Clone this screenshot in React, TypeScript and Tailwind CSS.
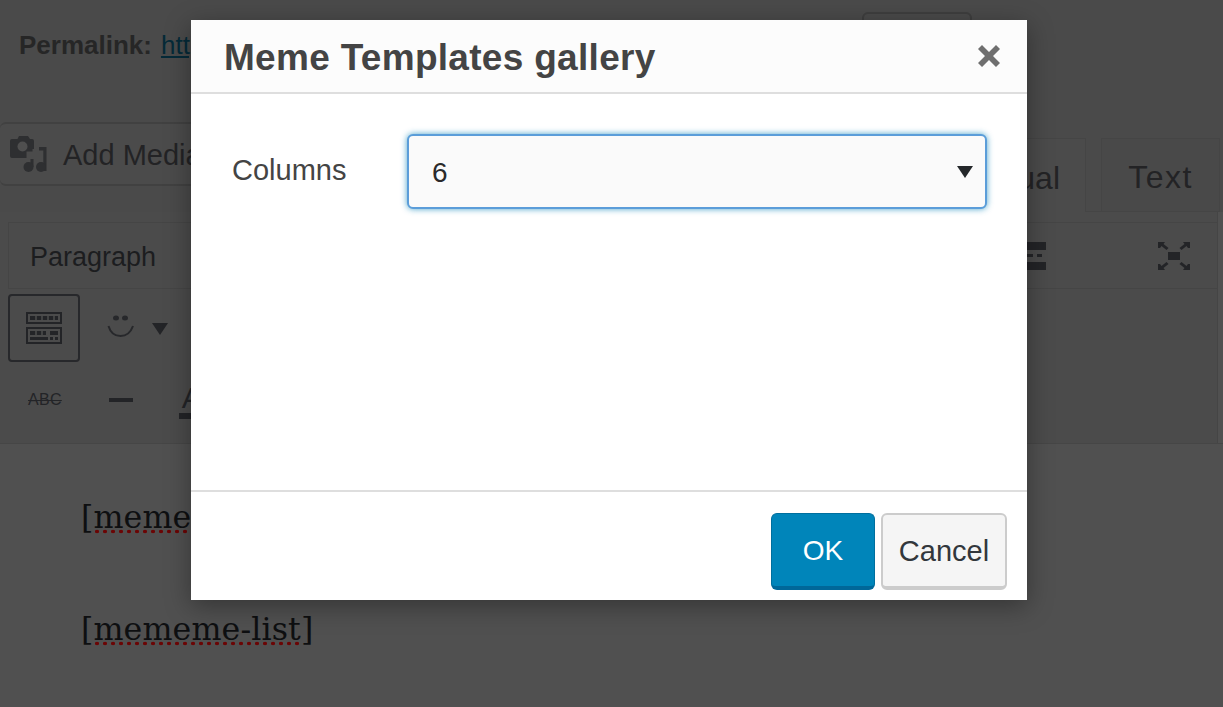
import React from "react";

const sans = "font-['Liberation_Sans',Arial,sans-serif]";

function MediaIcon() {
  return (
    <svg width="37" height="37" viewBox="0 0 37 37">
      <path d="M2 3h5.500l1.500-3h9l2 3h2a2 2 0 0 1 2 2v8h-1.500v2.500h-6V22H2a2 2 0 0 1-2-2V5a2 2 0 0 1 2-2z" fill="#2e2f31" />
      <circle cx="12.500" cy="10.500" r="5" fill="#4f4f4f" />
      <path d="M29 11h7.500v24h-3.200V14.500H29z" fill="#2e2f31" />
      <circle cx="31" cy="31" r="5" fill="#2e2f31" />
      <path d="M20.500 23h3v8h-3z" fill="#2e2f31" />
      <circle cx="18.500" cy="31" r="5" fill="#2e2f31" />
    </svg>
  );
}

function KeyboardIcon() {
  return (
    <svg width="36" height="32" viewBox="0 0 36 32" fill="none">
      <rect x="1" y="1" width="34" height="10" stroke="#232427" strokeWidth="2" />
      <rect x="1" y="16" width="34" height="15" stroke="#232427" strokeWidth="2" />
      <path d="M4 4h28v4H4zM4 19h16v4H4zM4 25h18v3H4zM24 19h8v4h-8zM24 25h3v3h-3zM29 25h3v3h-3z" fill="#232427" />
      <path d="M10 3v6M16 3v6M22 3v6M28 3v6M10 18v5M16 18v5" stroke="#4d4d4d" strokeWidth="1.500" />
    </svg>
  );
}

function Smile() {
  return (
    <svg width="28" height="24" viewBox="0 0 28 24" fill="none">
      <ellipse cx="9" cy="3" rx="3" ry="2.500" fill="#27282b" />
      <ellipse cx="18" cy="3" rx="3" ry="2.500" fill="#27282b" />
      <path d="M1.500 11c2 7 7 10 12 10s10-3 12.500-10" stroke="#27282b" strokeWidth="2" />
    </svg>
  );
}

function Caret({ color = "#232427", w = 16, h = 12 }: { color?: string; w?: number; h?: number }) {
  return (
    <svg width={w} height={h} viewBox="0 0 16 12">
      <path d="M0 0h16L8 12z" fill={color} />
    </svg>
  );
}

function FullscreenIcon() {
  return (
    <svg width="32" height="28" viewBox="0 0 32 28" fill="#232427">
      <path d="M10 10h12v8H10z" />
      <path d="M0 0h7L5.500 2l5 4-2 2-5-4L2 6H0zM32 0h-7l1.500 2-5 4 2 2 5-4L30 6h2zM0 28h7l-1.500-2 5-4-2-2-5 4L2 22H0zM32 28h-7l1.500-2-5-4 2-2 5 4 1.500-2h2z" />
    </svg>
  );
}

function MoreIcon() {
  return (
    <svg width="19" height="28" viewBox="0 0 19 28" fill="#232427">
      <path d="M0 0h19v8H0zM0 20h19v8H0zM0 12h6v3H0zM10 12h5v3h-5z" />
    </svg>
  );
}

function Shortcode({ text, open }: { text: string; open?: boolean }) {
  return (
    <p className="font-['DejaVu_Serif','Liberation_Serif',serif] text-[31.7px] leading-[40px] text-[#0e0f11] tracking-[0.1px] whitespace-nowrap">
      [
      <span className="bg-[radial-gradient(circle,#6a0505_1.7px,transparent_2.1px)] bg-[length:8px_5px] bg-[position:0_calc(100%-1px)] bg-repeat-x">
        {text}
      </span>
      {open ? "" : "]"}
    </p>
  );
}

export default function App() {
  return (
    <div className={`${sans} relative w-[1223px] h-[707px] overflow-hidden bg-[#505050]`}>
      {/* Page behind the dialog */}
      <div className="flex flex-col h-full">
        <div className="bg-[#4a4a4a] h-[123px] flex justify-between shrink-0">
          <div className="flex items-start pl-[19px] pt-[30px] text-[26px] leading-[30px]">
            <span className="font-bold text-[#262626]">Permalink:</span>
            <span className="ml-[9px] text-[#052a38] underline">http</span>
          </div>
          <div className="mr-[251px] mt-[12px] w-[110px] h-[40px] border-2 border-[#3e3e3e] rounded-[6px]" />
        </div>

        <div className="bg-[#4a4a4a] h-[89px] flex items-start justify-between shrink-0">
          <div className="w-[240px] h-[64px] -mt-px flex items-center gap-[16px] pl-[10px] border-2 border-l-0 border-[#414141] rounded-[6px] bg-[#4b4b4b]">
            <MediaIcon />
            <span className="pt-[3px] text-[29px] text-[#232325]">Add Media</span>
          </div>
          <div className="flex items-start h-[74px] mt-[15px] mr-[3px]">
            <div className="w-[86px] h-[74px] bg-[#4b4b4b] border border-b-0 border-[#454545] flex items-center justify-end pr-[25px] pt-[4px] text-[32px] text-[#232325]">
              ual
            </div>
            <div className="w-[15px] h-[74px] border-b border-[#454545]" />
            <div className="w-[119px] h-[74px] bg-[#494949] border border-[#454545] flex items-center justify-center pt-[4px] text-[32px] tracking-[1.5px] text-[#232325]">
              Text
            </div>
          </div>
        </div>

        <div className="bg-[#4b4b4b] h-[231px] mr-[5px] pt-[10px] border-r border-[#454545] shrink-0 flex flex-col">
          <div className="h-[67px] ml-[8px] border border-r-0 border-[#454545] flex items-center justify-between pr-[27px] shrink-0">
            <span className="pl-[21px] pt-[3px] text-[27px] text-[#1c1d1f]">Paragraph</span>
            <div className="flex items-center gap-[112px]">
              <MoreIcon />
              <FullscreenIcon />
            </div>
          </div>
          <div className="h-[68px] mt-[5px] ml-[8px] flex items-center shrink-0">
            <div className="w-[72px] h-[68px] border-2 border-[#27282b] rounded-[4px] flex items-center justify-center">
              <KeyboardIcon />
            </div>
            <div className="ml-[27px] mt-[-2px]"><Smile /></div>
            <div className="ml-[17px] mt-[2px]"><Caret /></div>
          </div>
          <div className="flex items-center flex-1 pb-[6px]">
            <span className="ml-[28px] text-[16px] line-through text-[#232427] tracking-[0.3px]">ABC</span>
            <span className="ml-[47px] w-[24px] h-[4px] bg-[#232427]" />
            <span className="ml-[46px] w-[26px] mt-[2px] border-b-[6px] border-[#232427] text-[30px] leading-[30px] text-center text-[#232427]">
              A
            </span>
          </div>
        </div>

        <div className="border-t border-[#464646] pl-[81px] pt-[53px] flex flex-col gap-[72px]">
          <Shortcode text="mememe-list" open />
          <Shortcode text="mememe-list" />
        </div>
      </div>

      {/* Modal dialog */}
      <div className="absolute left-[191px] top-[20px] w-[836px] h-[580px] bg-white flex flex-col shadow-[0_6px_24px_rgba(0,0,0,0.35)]">
        <div className="h-[74px] bg-[#fcfcfc] border-b-2 border-[#dedede] shrink-0 flex items-center justify-between pl-[33px] pr-[26px]">
          <h1 className="pt-[3px] text-[37px] tracking-[0.3px] font-bold text-[#444444] leading-none">Meme Templates gallery</h1>
          <svg width="24" height="24" viewBox="0 0 24 24">
            <path d="M5 1l7 7 7-7 4 4-7 7 7 7-4 4-7-7-7 7-4-4 7-7-7-7z" fill="#6f6f6f" />
          </svg>
        </div>
        <div className="flex-1 flex items-start pt-[40px] pl-[41px] pr-[40px]">
          <label className="w-[175px] pt-[20px] text-[29px] leading-[32px] text-[#444444]">Columns</label>
          <div className="flex-1 h-[75px] rounded-[6px] border-2 border-[#5b9dd9] bg-[#fafafa] shadow-[0_0_6px_rgba(30,140,190,0.8)] flex items-center justify-between pl-[23px] pr-[12px]">
            <span className="pt-[3px] text-[28px] text-[#2a2a2a]">6</span>
            <Caret color="#24272a" w={16} h={12} />
          </div>
        </div>
        <div className="h-[110px] border-t-2 border-[#dedede] shrink-0 flex items-start justify-end gap-[6px] pt-[21px] pr-[20px]">
          <button className="w-[104px] h-[77px] pt-[2px] rounded-[6px] bg-[#0085ba] border border-[#006f9e] border-b-[4px] border-b-[#006799] text-[28px] text-white">
            OK
          </button>
          <button className="w-[126px] h-[77px] pt-[2px] rounded-[6px] bg-[#f5f5f5] border-2 border-[#cccccc] border-b-[4px] text-[29px] text-[#32373c]">
            Cancel
          </button>
        </div>
      </div>
    </div>
  );
}
